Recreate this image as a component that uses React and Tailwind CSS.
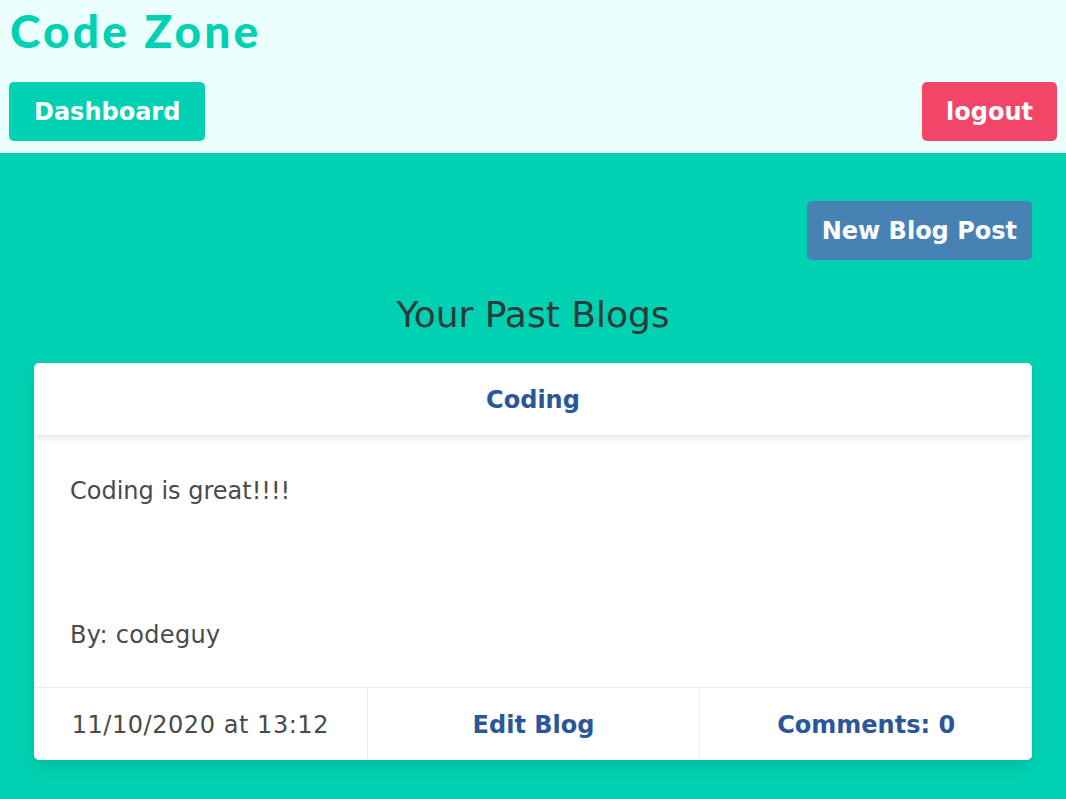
/*
 * Dashboard — ログイン後のダッシュボード
 * ヘッダー（タイトル・ナビ）と過去のブログ一覧カードを表示する。
 */
import React from "react";

const blogs = [
  {
    id: 1,
    title: "Coding",
    body: "Coding is great!!!!",
    author: "codeguy",
    date: "11/10/2020 at 13:12",
    comments: 0,
  },
];

const BlogCard = ({ blog }) => (
  <div className="bg-white rounded-[5px] shadow-[0_8px_16px_-2px_rgba(10,10,10,0.1),0_0_0_1px_rgba(10,10,10,0.02)] overflow-hidden">
    <header className="shadow-[0_3px_6px_rgba(10,10,10,0.1)] relative">
      <p className="text-center font-bold text-[#2a5799] pt-[19px] pb-[17px] leading-9">
        {blog.title}
      </p>
    </header>
    <div className="px-9 pt-[38px] pb-[34px] text-[#4a4a4a]">
      <p className="leading-9">{blog.body}</p>
      <p className="leading-9 mt-[108px] tracking-[0.3px]">By: {blog.author}</p>
    </div>
    {/* 日付・編集・コメント数のフッター */}
    <footer className="grid grid-cols-3 border-t border-[#ededed]">
      <p className="text-center pt-[19px] pb-[17px] leading-9 text-[#4a4a4a] tracking-[0.55px]">
        {blog.date}
      </p>
      <a className="text-center pt-[19px] pb-[17px] leading-9 font-bold text-[#2a5799] border-l border-[#ededed]">
        Edit Blog
      </a>
      <a className="text-center pt-[19px] pb-[17px] leading-9 font-bold text-[#2a5799] border-l border-[#ededed]">
        Comments: {blog.comments}
      </a>
    </footer>
  </div>
);

export default function App() {
  return (
    <div className="min-h-screen flex flex-col bg-[#00d1b2] text-[24px] font-['DejaVu_Sans',Verdana,sans-serif]">
      <nav className="bg-[#ebfffc] h-[153px] px-[9px]">
        <h1 className="font-['Lato',sans-serif] font-black text-[46px] leading-none text-[#00d1b2] pt-[8px] pl-[1px] tracking-[3.2px]">
          Code Zone
        </h1>
        <div className="flex justify-between mt-[28px]">
          <button className="bg-[#00d1b2] text-white font-bold h-[59px] px-[25px] rounded-[5px] leading-9">
            Dashboard
          </button>
          <button className="bg-[#f14668] text-white font-bold h-[59px] px-[24px] rounded-[5px] leading-9">
            logout
          </button>
        </div>
      </nav>
      <main className="flex-1 px-[34px] pt-[48px] pb-10">
        <div className="flex justify-end">
          <button className="bg-[#4682b4] text-white font-bold h-[59px] px-[15px] rounded-[5px] leading-9">
            New Blog Post
          </button>
        </div>
        <h2 className="text-center text-[36px] leading-none text-[#2b3a3a] mt-[37px] mb-[30px]">
          Your Past Blogs
        </h2>
        {blogs.map((b) => (
          <BlogCard key={b.id} blog={b} />
        ))}
      </main>
    </div>
  );
}
